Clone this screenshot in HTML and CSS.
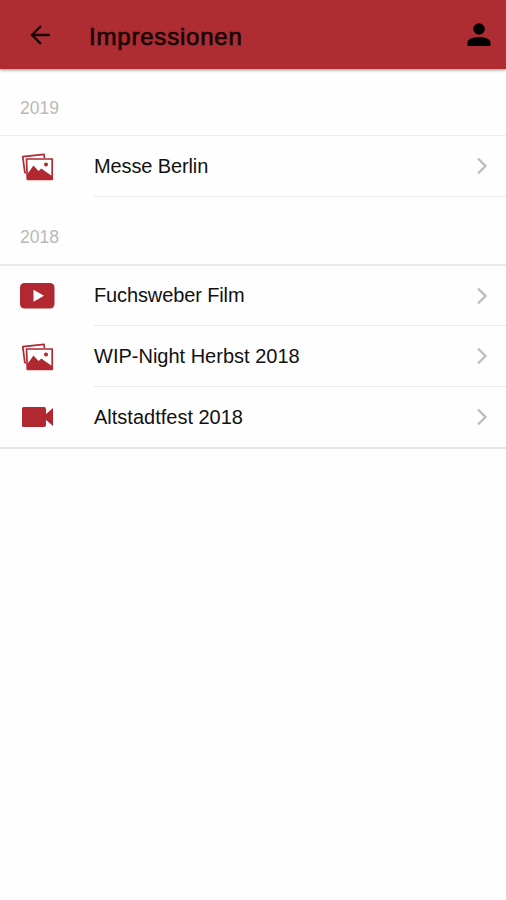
FILE: index.html
```html
<!DOCTYPE html>
<html lang="de">
<head>
<meta charset="utf-8">
<title>Impressionen</title>
<link rel="stylesheet" href="styles.css">
</head>
<body>
<svg class="symbols" aria-hidden="true">
  <symbol id="photos" viewBox="0 0 34 30">
    <g fill="none" stroke="currentColor" stroke-width="1.700" stroke-linejoin="round">
      <path d="M6 21 4.800 20.500 2.800 4.600 24 2.300 24.400 6"/>
      <path d="M6.500 7H32.200V27.300H7.300Z" fill="#fff"/>
    </g>
    <path d="M7 27.500V22.500L13.500 13.500 18.500 19 21.500 16.500 24 18.500 32 24V27.500Z" fill="currentColor"/>
    <circle cx="26" cy="12.500" r="2" fill="currentColor"/>
  </symbol>
  <symbol id="chevron" viewBox="0 0 12 18">
    <path d="M2 1.500 9.500 9 2 16.500" fill="none" stroke="currentColor" stroke-width="2.400"/>
  </symbol>
</svg>
<header class="toolbar">
  <svg class="back" viewBox="0 0 22 22"><path d="M21 11H3.200M12 2 3 11 12 20" fill="none" stroke="currentColor" stroke-width="2.400"/></svg>
  <h1 class="title">Impressionen</h1>
  <svg class="user" viewBox="0 0 24 24"><circle cx="12" cy="6" r="5.800"/><path d="M0.500 23V19.500C.5 15.500 7.500 14 12 14S23.500 15.500 23.500 19.500V23Z"/></svg>
</header>
<main>
  <section>
    <h2 class="year">2019</h2>
    <ul class="list open">
      <li class="item"><svg class="icon"><use href="#photos"/></svg><div class="body"><span class="messe">Messe Berlin</span><svg class="chevron"><use href="#chevron"/></svg></div></li>
    </ul>
  </section>
  <section>
    <h2 class="year second">2018</h2>
    <ul class="list closed">
      <li class="item"><svg class="icon" viewBox="0 0 34 30"><rect y="2" width="34.500" height="25.500" rx="4.500" fill="currentColor"/><path d="M13.500 8.800 24 14.700 13.500 20.700Z" fill="#fff"/></svg><div class="body"><span class="film">Fuchsweber Film</span><svg class="chevron"><use href="#chevron"/></svg></div></li>
      <li class="item"><svg class="icon"><use href="#photos"/></svg><div class="body"><span>WIP-Night Herbst 2018</span><svg class="chevron"><use href="#chevron"/></svg></div></li>
      <li class="item"><svg class="icon" viewBox="0 0 34 30"><path d="M3.500 5H24Q26 5 26 7V12L33 6V24L26 18V23Q26 25 24 25H3.500Q2 25 2 23.500V6.500Q2 5 3.500 5Z" fill="currentColor"/></svg><div class="body"><span>Altstadtfest 2018</span><svg class="chevron"><use href="#chevron"/></svg></div></li>
    </ul>
  </section>
</main>
</body>
</html>
```
FILE: styles.css
```css
* { box-sizing: border-box; }
body {
  margin: 0;
  min-height: 100vh;
  background: #fefefe;
  color: #111;
  font-family: "Liberation Sans", Arial, sans-serif;
}
.symbols { position: absolute; width: 0; height: 0; }
.toolbar {
  height: 69px;
  padding: 3px 15px 0 29px;
  display: flex;
  align-items: center;
  background: #ad2d32;
  color: #180608;
  box-shadow: 0 1px 3px rgba(0, 0, 0, 0.45);
}
.back { width: 22px; height: 22px; margin-top: -2px; }
.title {
  flex: 1;
  margin: 1px 0 0 38px;
  font-size: 24px;
  line-height: 30px;
  font-weight: 400;
  letter-spacing: 0.8px;
  -webkit-text-stroke: 0.7px currentColor;
}
.user { width: 24px; height: 24px; margin-top: -2px; fill: #000; }
.year {
  height: 66px;
  margin: 0;
  padding: 12px 20px 0;
  font-size: 17.5px;
  line-height: 54px;
  font-weight: 400;
  color: #b9b9b9;
}
.second { height: 67px; padding-top: 13px; }
.list { margin: 0; padding: 0; list-style: none; border-top: 2px solid #ededed; }
.open { border-top-width: 1px; }
.item {
  height: 61px;
  padding-left: 20px;
  display: flex;
  align-items: center;
}
.icon { width: 34px; height: 30px; margin-right: 40px; color: #b12830; overflow: visible; }
.body {
  flex: 1;
  height: 61px;
  padding-right: 18px;
  display: flex;
  align-items: center;
  justify-content: space-between;
  border-bottom: 1px solid #e9e9e9;
  font-size: 20px;
}
.messe, .film { letter-spacing: -0.12px; }
.closed { border-top-color: #e9e9e9; }
.closed .item:first-child, .closed .item:first-child .body { height: 60px; }
.closed .item:last-child { height: 62px; border-bottom: 2px solid #e7e7e7; }
.closed .item:last-child .body { height: 60px; border-bottom: 0; }
.chevron { width: 12px; height: 18px; color: #bdbdbd; }
```
